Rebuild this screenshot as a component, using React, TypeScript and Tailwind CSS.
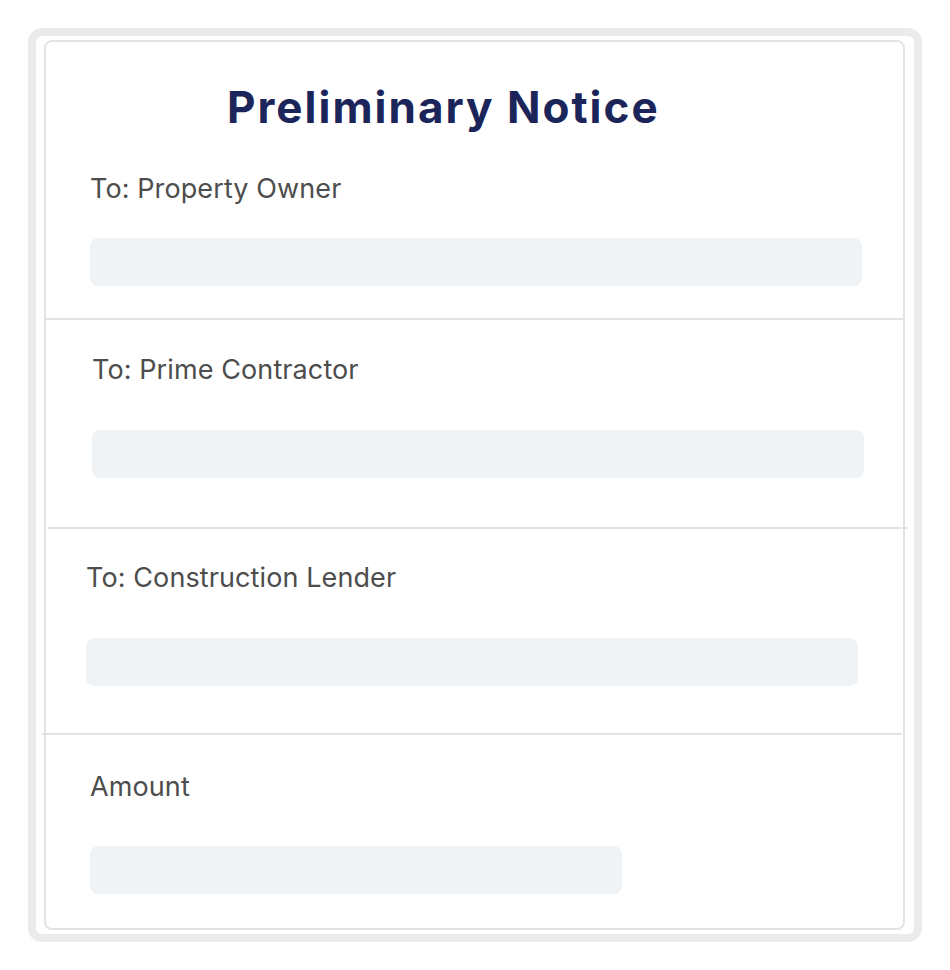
export default function App() {
  const label = "font-['Inter',sans-serif] text-[27px] leading-[32px] tracking-[0.1px] text-[#4d4d4d]";
  const field = "h-[48px] rounded-lg bg-[#f0f3f6]";

  return (
    <div className="min-h-screen bg-white pl-[28px] pt-[28px] font-['Inter',sans-serif]">
      <div className="flex h-[914px] w-[894px] flex-col rounded-[14px] border-8 border-[#ebebeb] pb-[4px] pl-[8px] pr-[9px] pt-[4px]">
        <div className="flex flex-1 flex-col rounded-lg border-2 border-[#e3e3e3]">
          {/* header + owner */}
          <section className="-mr-[2px] h-[278px] border-b-2 border-[#e3e3e3] pl-[44px] pt-[39px]">
            <h1 className="pl-[137px] text-[44px] font-bold leading-[52px] tracking-[2px] text-[#1b2559]">Preliminary Notice</h1>
            <p className={`${label} mt-[40px]`}>To: Property Owner</p>
            <div className={`${field} mt-[33px] w-[772px]`} />
          </section>

          <section className="-mr-[5px] ml-[2px] h-[209px] border-b-2 border-[#e3e3e3] pl-[44px] pt-[34px]">
            <p className={label}>To: Prime Contractor</p>
            <div className={`${field} mt-[44px] h-[47px] w-[772px]`} />
          </section>

          <section className="-ml-[4px] mr-[1px] h-[206px] border-b-2 border-[#e3e3e3] pl-[44px] pt-[33px]">
            <p className={label}>To: Construction Lender</p>
            <div className={`${field} mt-[44px] w-[772px]`} />
          </section>

          <section className="h-[193px] pl-[44px] pt-[36px]">
            <p className={label}>Amount</p>
            <div className={`${field} mt-[43px] h-[47px] w-[532px]`} />
          </section>
        </div>
      </div>
    </div>
  );
}
